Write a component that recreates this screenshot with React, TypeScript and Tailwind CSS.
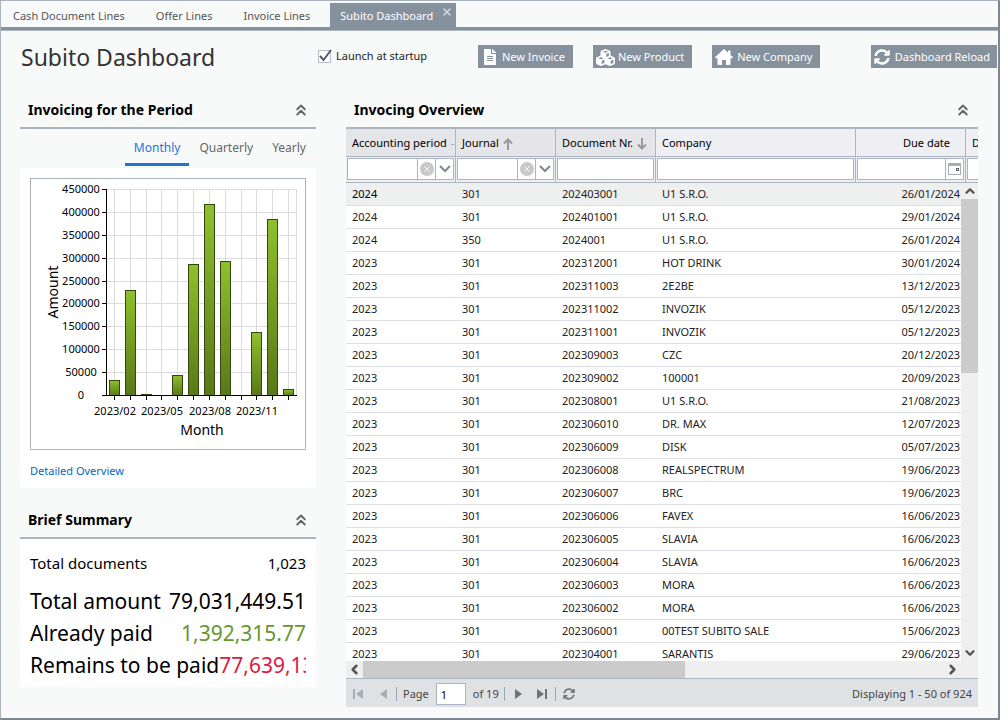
import { useState } from 'react';
import { FaFileAlt, FaSyncAlt } from 'react-icons/fa';
import { FaCubes } from 'react-icons/fa6';
import { ChevronDown, ChevronLeft, ChevronRight, ChevronUp, ChevronsUp, X } from 'lucide-react';

const openTabs = ['Cash Document Lines', 'Offer Lines', 'Invoice Lines', 'Subito Dashboard'];

const invoices = [
  ['2024', '301', '202403001', 'U1 S.R.O.', '26/01/2024'],
  ['2024', '301', '202401001', 'U1 S.R.O.', '29/01/2024'],
  ['2024', '350', '2024001', 'U1 S.R.O.', '26/01/2024'],
  ['2023', '301', '202312001', 'HOT DRINK', '30/01/2024'],
  ['2023', '301', '202311003', '2E2BE', '13/12/2023'],
  ['2023', '301', '202311002', 'INVOZIK', '05/12/2023'],
  ['2023', '301', '202311001', 'INVOZIK', '05/12/2023'],
  ['2023', '301', '202309003', 'CZC', '20/12/2023'],
  ['2023', '301', '202309002', '100001', '20/09/2023'],
  ['2023', '301', '202308001', 'U1 S.R.O.', '21/08/2023'],
  ['2023', '301', '202306010', 'DR. MAX', '12/07/2023'],
  ['2023', '301', '202306009', 'DISK', '05/07/2023'],
  ['2023', '301', '202306008', 'REALSPECTRUM', '19/06/2023'],
  ['2023', '301', '202306007', 'BRC', '19/06/2023'],
  ['2023', '301', '202306006', 'FAVEX', '16/06/2023'],
  ['2023', '301', '202306005', 'SLAVIA', '16/06/2023'],
  ['2023', '301', '202306004', 'SLAVIA', '16/06/2023'],
  ['2023', '301', '202306003', 'MORA', '16/06/2023'],
  ['2023', '301', '202306002', 'MORA', '16/06/2023'],
  ['2023', '301', '202306001', '00TEST SUBITO SALE', '15/06/2023'],
  ['2023', '301', '202304001', 'SARANTIS', '29/06/2023'],
];

const months = [
  { x: 83, value: 33000, label: '2023/02' },
  { x: 99, value: 229000 },
  { x: 115, value: 2500 },
  { x: 130, value: 0, label: '2023/05' },
  { x: 146, value: 43500 },
  { x: 162, value: 286000 },
  { x: 178, value: 417000, label: '2023/08' },
  { x: 194, value: 292500 },
  { x: 210, value: 0 },
  { x: 225, value: 137000, label: '2023/11' },
  { x: 241, value: 384000 },
  { x: 257, value: 13000 },
];

const amounts = [0, 50000, 100000, 150000, 200000, 250000, 300000, 350000, 400000, 450000];

const BASE = 216;
const toY = (value: number) => Math.round(BASE - (value / 450000) * 206);

const AmountChart = () => (
  <svg viewBox="0 0 274 270" className="block w-full" role="img" aria-label="Amount by month">
    <defs>
      <linearGradient id="bar" x1="0" y1="0" x2="0" y2="1">
        <stop offset="0" stopColor="#8fc02c" />
        <stop offset="1" stopColor="#587818" />
      </linearGradient>
    </defs>
    <g stroke="#dcdcdc" shapeRendering="crispEdges">
      {amounts.slice(1).map((a) => (
        <line key={a} x1="76" x2="265" y1={toY(a) + 0.5} y2={toY(a) + 0.5} />
      ))}
      {months.map((m) => (
        <line key={m.x} x1={m.x + 0.5} x2={m.x + 0.5} y1="10" y2={BASE} />
      ))}
      <line x1="265.5" x2="265.5" y1="10" y2={BASE} />
    </g>
    {months.filter((m) => m.value > 0).map((m) => (
      <rect
        key={m.x}
        x={m.x - 4.5}
        y={toY(m.value) + 0.5}
        width="10"
        height={BASE - toY(m.value)}
        fill="url(#bar)"
        stroke="#33480f"
      />
    ))}
    <g stroke="#000" shapeRendering="crispEdges">
      <line x1="75.5" x2="75.5" y1="10" y2={BASE} />
      <line x1="71" x2="266" y1={BASE + 0.5} y2={BASE + 0.5} />
      {amounts.map((a) => (
        <line key={a} x1="71" x2="75" y1={toY(a) + 0.5} y2={toY(a) + 0.5} />
      ))}
      {months.map((m) => (
        <line key={m.x} x1={m.x + 0.5} x2={m.x + 0.5} y1={BASE} y2={BASE + 5} />
      ))}
    </g>
    <g fontSize="11" textAnchor="middle" fill="#000">
      {amounts.map((a) => (
        <text key={a} x="50" y={toY(a) + 4}>{a}</text>
      ))}
      {months.filter((m) => m.label).map((m) => (
        <text key={m.x} x={m.x + 1} y="236">{m.label}</text>
      ))}
    </g>
    <text x="171" y="256" fontSize="14" textAnchor="middle">Month</text>
    <text x="27" y="113" fontSize="14" textAnchor="middle" transform="rotate(-90 27 113)">Amount</text>
  </svg>
);

const PanelHeader = ({ title }: { title: string }) => (
  <div className="flex h-[37px] items-center justify-between border-b-2 border-[#adb5bf] pr-[6px] pl-2">
    <h2 className="text-[14px] font-bold text-black">{title}</h2>
    <button aria-label={`Collapse ${title}`} className="text-[#666]">
      <ChevronsUp size={18} strokeWidth={2.5} />
    </button>
  </div>
);

const filterBox = 'flex h-[22px] items-stretch border border-[#adb3c4] bg-white text-[#7d8894]';

const SelectFilter = ({ label }: { label: string }) => (
  <div className={filterBox}>
    <input aria-label={label} className="w-0 flex-1 outline-none" />
    <button aria-label={`Clear ${label}`} className="flex w-[18px] items-center justify-center border-l border-[#adb3c4]">
      <span className="flex size-[14px] items-center justify-center rounded-full bg-[#c8c8c8] text-white">
        <X size={10} strokeWidth={2} />
      </span>
    </button>
    <button aria-label={`Open ${label}`} className="flex w-[18px] items-center justify-center border-l border-[#adb3c4]">
      <svg width="12" height="8" viewBox="0 0 12 8" fill="none" stroke="currentColor" strokeWidth="2">
        <path d="M1 1L6 6L11 1" />
      </svg>
    </button>
  </div>
);

const SortArrow = ({ down = false }: { down?: boolean }) => (
  <svg width="10" height="12" viewBox="0 0 10 12" className={down ? 'rotate-180' : ''} fill="none" stroke="#999" strokeWidth="2">
    <path d="M5 12V3M1 5.500L5 1.500L9 5.500" />
  </svg>
);

const headCell = 'h-[28px] border-b border-[#adb5bf] px-[6px] pt-[2px] text-left font-normal overflow-hidden';
const filterCell = 'h-[26px] border-b border-[#adb5bf] px-px pt-px pb-0 align-top';

const InvoiceTable = () => (
  <table className="w-full table-fixed border-separate border-spacing-0 whitespace-nowrap text-[11px]">
    <colgroup>
      <col className="w-[110px]" />
      <col className="w-[100px]" />
      <col className="w-[100px]" />
      <col />
      <col className="w-[110px]" />
      <col className="w-[12px]" />
    </colgroup>
    <thead className="bg-[#eeeff2] text-black">
      <tr>
        <th className={`${headCell} border-r bg-[#e4e5e9]`}>
          <span className="flex items-center gap-1">Accounting period <span className="text-[#999]">-</span></span>
        </th>
        <th className={`${headCell} border-r bg-[#e4e5e9]`}>
          <span className="flex items-center gap-1">Journal <SortArrow /></span>
        </th>
        <th className={`${headCell} border-r bg-[#e4e5e9]`}>
          <span className="flex items-center gap-1">Document Nr. <SortArrow down /></span>
        </th>
        <th className={`${headCell} border-r`}>Company</th>
        <th className={`${headCell} border-r`}><span className="block pr-[9px] text-right">Due date</span></th>
        <th className={headCell}>D</th>
      </tr>
      <tr>
        <td className={`${filterCell} border-r`}><SelectFilter label="accounting period filter" /></td>
        <td className={`${filterCell} border-r`}><SelectFilter label="journal filter" /></td>
        <td className={`${filterCell} border-r`}>
          <div className={filterBox}><input aria-label="document number filter" className="w-0 flex-1 outline-none" /></div>
        </td>
        <td className={`${filterCell} border-r`}>
          <div className={filterBox}><input aria-label="company filter" className="w-0 flex-1 outline-none" /></div>
        </td>
        <td className={`${filterCell} border-r`}>
          <div className={filterBox}>
            <input aria-label="due date filter" className="w-0 flex-1 outline-none" />
            <button aria-label="Pick due date" className="flex w-[18px] items-center justify-center border-l border-[#adb3c4]">
              <svg width="13" height="12" viewBox="0 0 13 12" fill="none">
                <rect x="0.5" y="0.5" width="12" height="11" stroke="#a5adb6" />
                <rect width="13" height="3" fill="#a5adb6" />
                <rect x="8.500" y="5.500" width="2" height="2" stroke="#555f6b" />
              </svg>
            </button>
          </div>
        </td>
        <td className={`${filterCell} pr-0`}><div className="h-[22px] border border-r-0 border-[#adb3c4] bg-white" /></td>
      </tr>
    </thead>
    <tbody className="bg-white text-[#222]">
      {invoices.map((row, r) => (
        <tr key={row[2]} className={r === 0 ? 'bg-[#eeefef]' : ''}>
          {row.map((cell, c) => (
            <td
              key={c}
              className={`h-[23px] border-b border-[#dcdfe6] px-[6px] ${c === 4 ? 'text-right' : ''} ${r === 0 && c === 0 ? 'text-black' : ''}`}
            >
              {cell}
            </td>
          ))}
          <td className="border-b border-[#dcdfe6]"></td>
        </tr>
      ))}
    </tbody>
  </table>
);

const Pager = () => (
  <div className="flex h-[29px] items-center border-t border-[#adb5bf] bg-[#dfe2e5] px-[6px] pt-[2px] text-[11px] text-[#444]">
    <button aria-label="First page" className="mr-[14px] flex w-3 justify-center">
      <svg width="10" height="10" viewBox="0 0 10 10" fill="#a8adb2"><path d="M0 0H2V10H0ZM10 0V10L3 5Z" /></svg>
    </button>
    <button aria-label="Previous page" className="flex w-3 justify-center">
      <svg width="8" height="10" viewBox="0 0 8 10" fill="#a8adb2"><path d="M7 0V10L0 5Z" /></svg>
    </button>
    <span className="mr-[6px] ml-[6px] h-[14px] w-px bg-[#9aa7b3]" />
    <label htmlFor="page">Page</label>
    <input id="page" defaultValue="1" className="mr-[7px] ml-[7px] h-[22px] w-[30px] border border-[#adb3c9] bg-white px-1 text-black outline-none" />
    <span>of 19</span>
    <span className="mr-[10px] ml-[5px] h-[14px] w-px bg-[#9aa7b3]" />
    <button aria-label="Next page" className="mr-[14px]">
      <svg width="8" height="10" viewBox="0 0 8 10" fill="#6e7276"><path d="M0 0V10L7 5Z" /></svg>
    </button>
    <button aria-label="Last page">
      <svg width="11" height="10" viewBox="0 0 11 10" fill="#6e7276"><path d="M8 0H10V10H8ZM0 0V10L7 5Z" /></svg>
    </button>
    <span className="mr-[7px] ml-[7px] h-[14px] w-px bg-[#9aa7b3]" />
    <button aria-label="Refresh" className="text-[#777]"><FaSyncAlt size={12} /></button>
    <span className="ml-auto">Displaying 1 - 50 of 924</span>
  </div>
);

const HomeIcon = () => (
  <svg width="18" height="16" viewBox="0 0 18 16" fill="currentColor">
    <path d="M9 0L13 3.600V1.500H15.500V5.900L18 8.200L17.200 9.200H15.500V15Q15.500 16 14.500 16H11V11H7V16H3.500Q2.500 16 2.500 15V9.200H0.800L0 8.200Z" />
  </svg>
);

const actionButton = 'flex h-[23px] items-center bg-[#85919d] pt-px text-[11px] text-white whitespace-nowrap';

const App = () => {
  const [period, setPeriod] = useState('Monthly');

  return (
    <div className="flex h-screen flex-col overflow-hidden border border-r-2 border-b-2 border-[#a9b2bf] border-r-[#7d8791] border-b-[#7d8791] bg-[#f8faf9] font-['Noto_Sans','Open_Sans',sans-serif] text-black">
      {/* Open documents */}
      <nav className="flex h-[29px] shrink-0 items-end border-b-[3px] border-[#85919d] text-[11px] text-[#555]">
        {openTabs.map((tab, i) => (
          i === 3 ? (
            <div key={tab} className="ml-px flex h-6 items-start bg-[#85919d] pl-[10px] text-white">
              <button className="h-6 pt-[2px]">{tab}</button>
              <button aria-label="Close tab" className="mr-[3px] ml-2 pt-[3px] text-[#d6dbe0]">
                <X size={12} strokeWidth={3} />
              </button>
            </div>
          ) : (
            <button key={tab} className="h-6 pt-[2px] pr-[19px] pl-3">{tab}</button>
          )
        ))}
      </nav>

      {/* Title and actions */}
      <header className="flex h-[62px] shrink-0 items-center border-t border-[#adb5bf] pb-[10px] pl-5">
        <h1 className="w-[297px] pt-[2px] text-[23px] text-[#333]">Subito Dashboard</h1>
        <label className="flex w-[160px] items-center gap-[5px] text-[11px] text-[#222]">
          <span className="relative flex size-[13px]">
            <input type="checkbox" defaultChecked className="peer size-[13px] appearance-none border border-[#b7bdca] bg-white" />
            <svg viewBox="0 0 14 14" className="pointer-events-none absolute -top-px left-0 hidden size-[14px] peer-checked:block" fill="none" stroke="#505866" strokeWidth="2">
              <path d="M2 7L5.500 11L13 1" />
            </svg>
          </span>
          Launch at startup
        </label>
        <button className={`${actionButton} mr-5 gap-[6px] pr-2 pl-[6px]`}><FaFileAlt size={16} className="w-[12px]" />New Invoice</button>
        <button className={`${actionButton} mr-5 gap-[3px] pr-2 pl-[3px]`}><FaCubes size={19} />New Product</button>
        <button className={`${actionButton} gap-1 pr-2 pl-[3px]`}><HomeIcon />New Company</button>
        <button className={`${actionButton} mr-px ml-auto gap-[5px] pr-[7px] pl-[3px]`}><FaSyncAlt size={16} />Dashboard Reload</button>
      </header>

      <main className="flex min-h-0 flex-1 gap-[30px] pr-5 pb-[11px] pl-[19px]">
        <div className="w-[296px] shrink-0">
          <section>
            <PanelHeader title="Invoicing for the Period" />
            <div className="flex h-[37px] justify-end gap-px pr-px text-[12px] text-[#666]">
              {['Monthly', 'Quarterly', 'Yearly'].map((p) => (
                <button
                  key={p}
                  onClick={() => setPeriod(p)}
                  className={`border-b-[3px] px-[9px] pt-[3px] ${period === p ? 'border-[#1c76d8] text-[#1c76d8]' : 'border-transparent'}`}
                >
                  {p}
                </button>
              ))}
            </div>
            <div className="mt-[2px] bg-white px-[10px] pt-[10px] pb-[9px]">
              <div className="border border-[#a9b3bb]"><AmountChart /></div>
              <a href="#detail" className="mt-[13px] block text-[11px] leading-4 text-[#0068c4]">Detailed Overview</a>
            </div>
          </section>

          <section className="mt-[14px]">
            <PanelHeader title="Brief Summary" />
            <dl className="bg-white px-[10px] pt-[7px] pb-[5px] whitespace-nowrap">
              <div className="mb-[6px] flex h-[34px] items-center justify-between text-[15px]"><dt>Total documents</dt><dd>1,023</dd></div>
              <div className="flex h-8 items-center justify-between text-[21px]"><dt>Total amount</dt><dd>79,031,449.51</dd></div>
              <div className="flex h-8 items-center justify-between text-[21px]"><dt>Already paid</dt><dd className="text-[#65982f]">1,392,315.77</dd></div>
              <div className="flex h-8 items-center overflow-hidden text-[21px]"><dt>Remains to be paid</dt><dd className="text-[#e01840]">77,639,133.74</dd></div>
            </dl>
          </section>
        </div>

        <section className="flex min-w-0 flex-1 flex-col">
          <PanelHeader title="Invocing Overview" />
          <div className="relative min-h-0 flex-1 overflow-hidden">
            <InvoiceTable />
            <div className="absolute top-[54px] right-0 bottom-0 flex w-[17px] flex-col items-center bg-[#efefef] text-[#555]">
              <ChevronUp size={16} strokeWidth={4} className="p-px" />
              <div className="h-[174px] w-full bg-[#cbcbcb]" />
              <ChevronDown size={16} strokeWidth={4} className="mt-auto p-px" />
            </div>
          </div>
          <div className="flex h-[17px] items-center bg-[#efefef] text-[#555]">
            <ChevronLeft size={17} strokeWidth={4} className="p-px" />
            <div className="h-full w-[51%] bg-[#cbcbcb]" />
            <ChevronRight size={17} strokeWidth={4} className="mr-[17px] ml-auto p-px" />
          </div>
          <Pager />
        </section>
      </main>
    </div>
  );
};

export default App;
